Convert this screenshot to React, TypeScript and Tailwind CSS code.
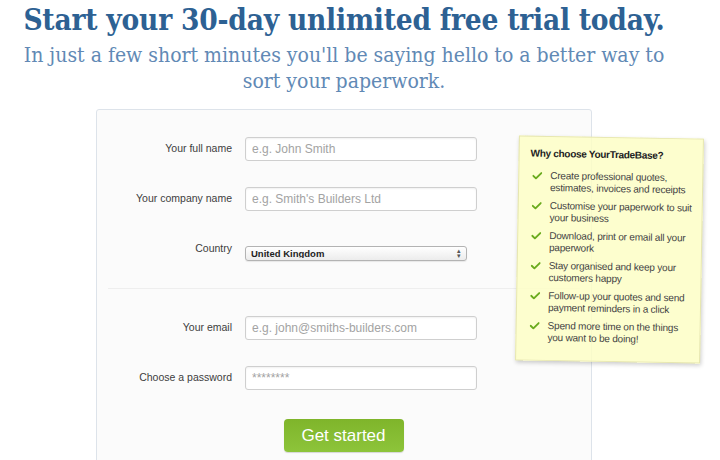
import { useState } from "react";

const slab = { fontFamily: '"DejaVu Serif Condensed", "DejaVu Serif", serif' };

// each perk is already broken into the two lines the note shows
const perks: [string, string][] = [
  ["Create professional quotes,", "estimates, invoices and receipts"],
  ["Customise your paperwork to suit", "your business"],
  ["Download, print or email all your", "paperwork"],
  ["Stay organised and keep your", "customers happy"],
  ["Follow-up your quotes and send", "payment reminders in a click"],
  ["Spend more time on the things", "you want to be doing!"],
];

function Field({ label, placeholder }: { label: string; placeholder: string }) {
  return (
    <div className="grid grid-cols-[124px_232px] items-center gap-x-[13px]">
      <label className="text-right text-[10.5px] text-[#3d3d3d]">{label}</label>
      <input
        placeholder={placeholder}
        className="h-[24px] rounded-[3px] border border-[#cfcfcf] bg-white px-[6px] text-[12px] text-[#333] shadow-[inset_0_1px_2px_rgba(0,0,0,0.06)] placeholder:text-[#a3a3a3] focus:outline-none"
      />
    </div>
  );
}

function Tick() {
  return (
    <svg viewBox="0 0 12 10" className="mt-[2px] h-[8px] w-[10px] shrink-0">
      <path d="M1 5.2 L4.4 8.4 L11 1.6" fill="none" stroke="#6aab1e" strokeWidth="2.4" strokeLinecap="round" strokeLinejoin="round" />
    </svg>
  );
}

export default function App() {
  const [country, setCountry] = useState("United Kingdom");

  return (
    <div className="relative h-[460px] w-[720px] overflow-hidden bg-white" style={{ fontFamily: '"Liberation Sans", Arial, sans-serif' }}>
      <div className="w-[688px] text-center">
        <h1 className="pt-[3px] text-[29.5px] font-bold leading-[34px] tracking-[-0.2px] text-[#2d6193]" style={slab}>
          Start your 30-day unlimited free trial today.
        </h1>
        <p className="mt-[5px] text-[21px] leading-[26px] text-[#6189b5]" style={slab}>
          In just a few short minutes you'll be saying hello to a better way to
          <br />
          sort your paperwork.
        </p>

        <div className="mx-auto mt-[15px] h-[400px] w-[496px] rounded-[3px] border border-[#dde3ea] bg-[#fbfbfb] px-[11px] pt-[27px] text-left">
          <div className="flex flex-col gap-[26px]">
            <Field label="Your full name" placeholder="e.g. John Smith" />
            <Field label="Your company name" placeholder="e.g. Smith's Builders Ltd" />
          </div>

          <div className="mt-[36px] grid grid-cols-[124px_222px] items-start gap-x-[13px]">
            <span className="mt-[-6px] text-right text-[10.5px] leading-[14px] text-[#3d3d3d]">Country</span>
            <div className="relative mt-[-1px]">
              <select
                value={country}
                onChange={(e) => setCountry(e.target.value)}
                className="block h-[15px] w-full appearance-none rounded-[3px] border border-[#b3b3b3] bg-gradient-to-b from-white to-[#ececec] pl-[5px] text-[9.5px] font-bold leading-none text-[#222] shadow-[0_1px_1px_rgba(0,0,0,0.08)] focus:outline-none"
              >
                <option>United Kingdom</option>
                <option>Ireland</option>
              </select>
              <span className="pointer-events-none absolute right-[6px] top-[2px] text-[7px] leading-[5px] text-[#555]">▴<br />▾</span>
            </div>
          </div>

          <div className="mt-[27px] h-px bg-[#eeeeee]" />

          <div className="mt-[27px] flex flex-col gap-[26px]">
            <Field label="Your email" placeholder="e.g. john@smiths-builders.com" />
            <Field label="Choose a password" placeholder="********" />
          </div>

          <div className="mt-[29px] flex justify-center pr-[1px]">
            <button className="h-[33px] w-[120px] rounded-[4px] bg-gradient-to-b from-[#7fb52b] to-[#8dc43a] text-[17px] text-white shadow-[0_1px_1px_rgba(0,0,0,0.15)]">
              Get started
            </button>
          </div>
        </div>
      </div>

      <aside className="absolute left-[517px] top-[137px] h-[225px] w-[185px] rotate-1 border border-[#e6e6b0] bg-[#fdfec5]/85 pl-[11px] pr-[4px] pt-[11px] text-[10px] leading-[12px] tracking-[-0.2px] text-[#444] shadow-[1px_2px_4px_rgba(0,0,0,0.2)]">
        <h3 className="mb-[10px] whitespace-nowrap text-[10px] font-bold tracking-[-0.3px] text-[#222]">Why choose YourTradeBase?</h3>
        <ul className="flex flex-col gap-[6px]">
          {perks.map(([a, b]) => (
            <li key={a} className="flex gap-[8px] pl-[2px]">
              <Tick />
              <span className="whitespace-nowrap">
                {a}
                <br />
                {b}
              </span>
            </li>
          ))}
        </ul>
      </aside>
    </div>
  );
}
